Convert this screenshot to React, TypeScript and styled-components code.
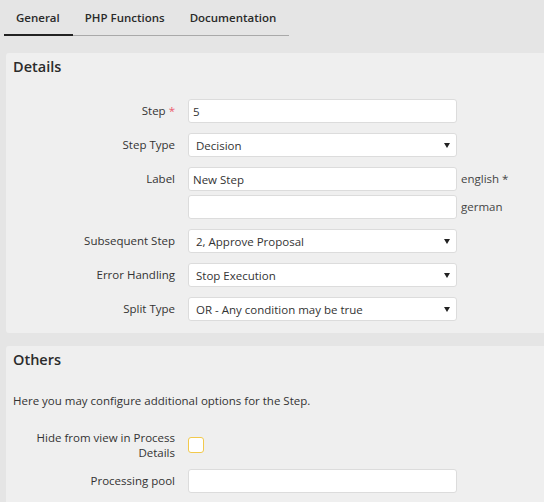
import React from 'react';
import styled, { createGlobalStyle } from 'styled-components';

const GlobalStyle = createGlobalStyle`
  html, body {
    margin: 0;
    padding: 0;
    background: #e5e5e5;
    font-family: "Open Sans", "Liberation Sans", sans-serif;
    font-size: 11.5px;
    color: #333;
  }
`;

const Page = styled.div`
  padding: 0 0 20px 4px;
  overflow: hidden;
`;

const TabBar = styled.div`
  display: flex;
  width: 285px;
  height: 36px;
  border-bottom: 1px solid #a9a9a9;
  box-sizing: border-box;
`;

const Tab = styled.div<{ active?: boolean }>`
  display: flex;
  align-items: center;
  padding: 0 13px 0 12px;
  margin-bottom: -1px;
  white-space: nowrap;
  font-size: 11.5px;
  font-weight: 600;
  color: #2a2a2a;
  border-bottom: ${p => (p.active ? '2px solid #222' : '2px solid transparent')};
  cursor: pointer;
`;

const Panel = styled.section<{ top: number }>`
  margin: ${p => p.top}px 0 0 2px;
  background: #efefef;
  border-radius: 3px 0 0 3px;
  padding-bottom: 12px;
`;

const PanelTitle = styled.h2`
  margin: 0;
  padding: 4px 7px 6px;
  font-size: 14.5px;
  line-height: 20px;
  font-weight: 600;
  color: #2b2b2b;
`;

const Form = styled.div<{ pad: number }>`
  padding-top: ${p => p.pad}px;
  display: flex;
  flex-direction: column;
  gap: 10px;
`;

const Row = styled.div`
  display: grid;
  grid-template-columns: 169px 269px auto;
  column-gap: 13px;
  align-items: start;
`;

const Label = styled.label`
  text-align: right;
  line-height: 24px;
  color: #333;
`;

const WrapLabel = styled.label`
  text-align: right;
  line-height: 15px;
  padding-left: 20px;
  align-self: center;
`;

const Required = styled.span`
  color: #ec5a6e;
  margin-left: 3px;
`;

const FieldStack = styled.div`
  display: flex;
  flex-direction: column;
  gap: 4px;
`;

const LangStack = styled.div`
  display: flex;
  flex-direction: column;
  gap: 4px;
  margin-left: -9px;
`;

const Lang = styled.span`
  line-height: 24px;
  color: #444;
`;

const TextInput = styled.input`
  box-sizing: border-box;
  width: 269px;
  height: 24px;
  padding: 0 4px;
  border: 1px solid #dcdcdc;
  border-radius: 3px;
  background: #fff;
  font-family: inherit;
  font-size: 11.5px;
  color: #333;
  outline: none;
`;

const SelectWrap = styled.div`
  position: relative;
  width: 269px;
  height: 24px;
`;

const Select = styled.select`
  appearance: none;
  -webkit-appearance: none;
  box-sizing: border-box;
  width: 100%;
  height: 24px;
  padding: 0 20px 0 7px;
  border: 1px solid #dcdcdc;
  border-radius: 3px;
  background: #fff;
  font-family: inherit;
  font-size: 11.5px;
  color: #333;
  outline: none;
`;

const Arrow = styled.span`
  position: absolute;
  right: 7px;
  top: 10px;
  width: 0;
  height: 0;
  border-left: 3.5px solid transparent;
  border-right: 3.5px solid transparent;
  border-top: 5px solid #222;
  pointer-events: none;
`;

const Description = styled.p`
  margin: 16px 0 20px;
  padding: 0 7px;
  line-height: 18px;
`;

const Checkbox = styled.span`
  display: block;
  box-sizing: border-box;
  width: 16px;
  height: 16px;
  border: 1px solid #f2c94c;
  border-radius: 3px;
  background: #fff;
  align-self: center;
`;

const Others = styled.div`
  display: flex;
  flex-direction: column;
  gap: 9px;
`;

const SelectField: React.FC<{ value: string; options: string[] }> = ({ value, options }) => (
  <SelectWrap>
    <Select defaultValue={value}>
      {options.map(o => (
        <option key={o}>{o}</option>
      ))}
    </Select>
    <Arrow />
  </SelectWrap>
);

export default function App() {
  return (
    <>
      <GlobalStyle />
      <Page>
        <TabBar>
          <Tab active>General</Tab>
          <Tab>PHP Functions</Tab>
          <Tab>Documentation</Tab>
        </TabBar>

        <Panel top={17}>
          <PanelTitle>Details</PanelTitle>
          <Form pad={16}>
            <Row>
              <Label>
                Step<Required>*</Required>
              </Label>
              <TextInput defaultValue="5" />
            </Row>
            <Row>
              <Label>Step Type</Label>
              <SelectField value="Decision" options={['Action', 'Decision']} />
            </Row>
            <Row>
              <Label>Label</Label>
              <FieldStack>
                <TextInput defaultValue="New Step" />
                <TextInput defaultValue="" />
              </FieldStack>
              <LangStack>
                <Lang>english *</Lang>
                <Lang>german</Lang>
              </LangStack>
            </Row>
            <Row>
              <Label>Subsequent Step</Label>
              <SelectField value="2, Approve Proposal" options={['1, Start', '2, Approve Proposal']} />
            </Row>
            <Row>
              <Label>Error Handling</Label>
              <SelectField value="Stop Execution" options={['Stop Execution', 'Continue']} />
            </Row>
            <Row>
              <Label>Split Type</Label>
              <SelectField
                value="OR - Any condition may be true"
                options={['AND - All conditions must be true', 'OR - Any condition may be true']}
              />
            </Row>
          </Form>
        </Panel>

        <Panel top={13}>
          <PanelTitle>Others</PanelTitle>
          <Description>Here you may configure additional options for the Step.</Description>
          <Others>
            <Row>
              <WrapLabel>Hide from view in Process Details</WrapLabel>
              <Checkbox />
            </Row>
            <Row>
              <Label>Processing pool</Label>
              <TextInput defaultValue="" />
            </Row>
          </Others>
        </Panel>
      </Page>
    </>
  );
}
